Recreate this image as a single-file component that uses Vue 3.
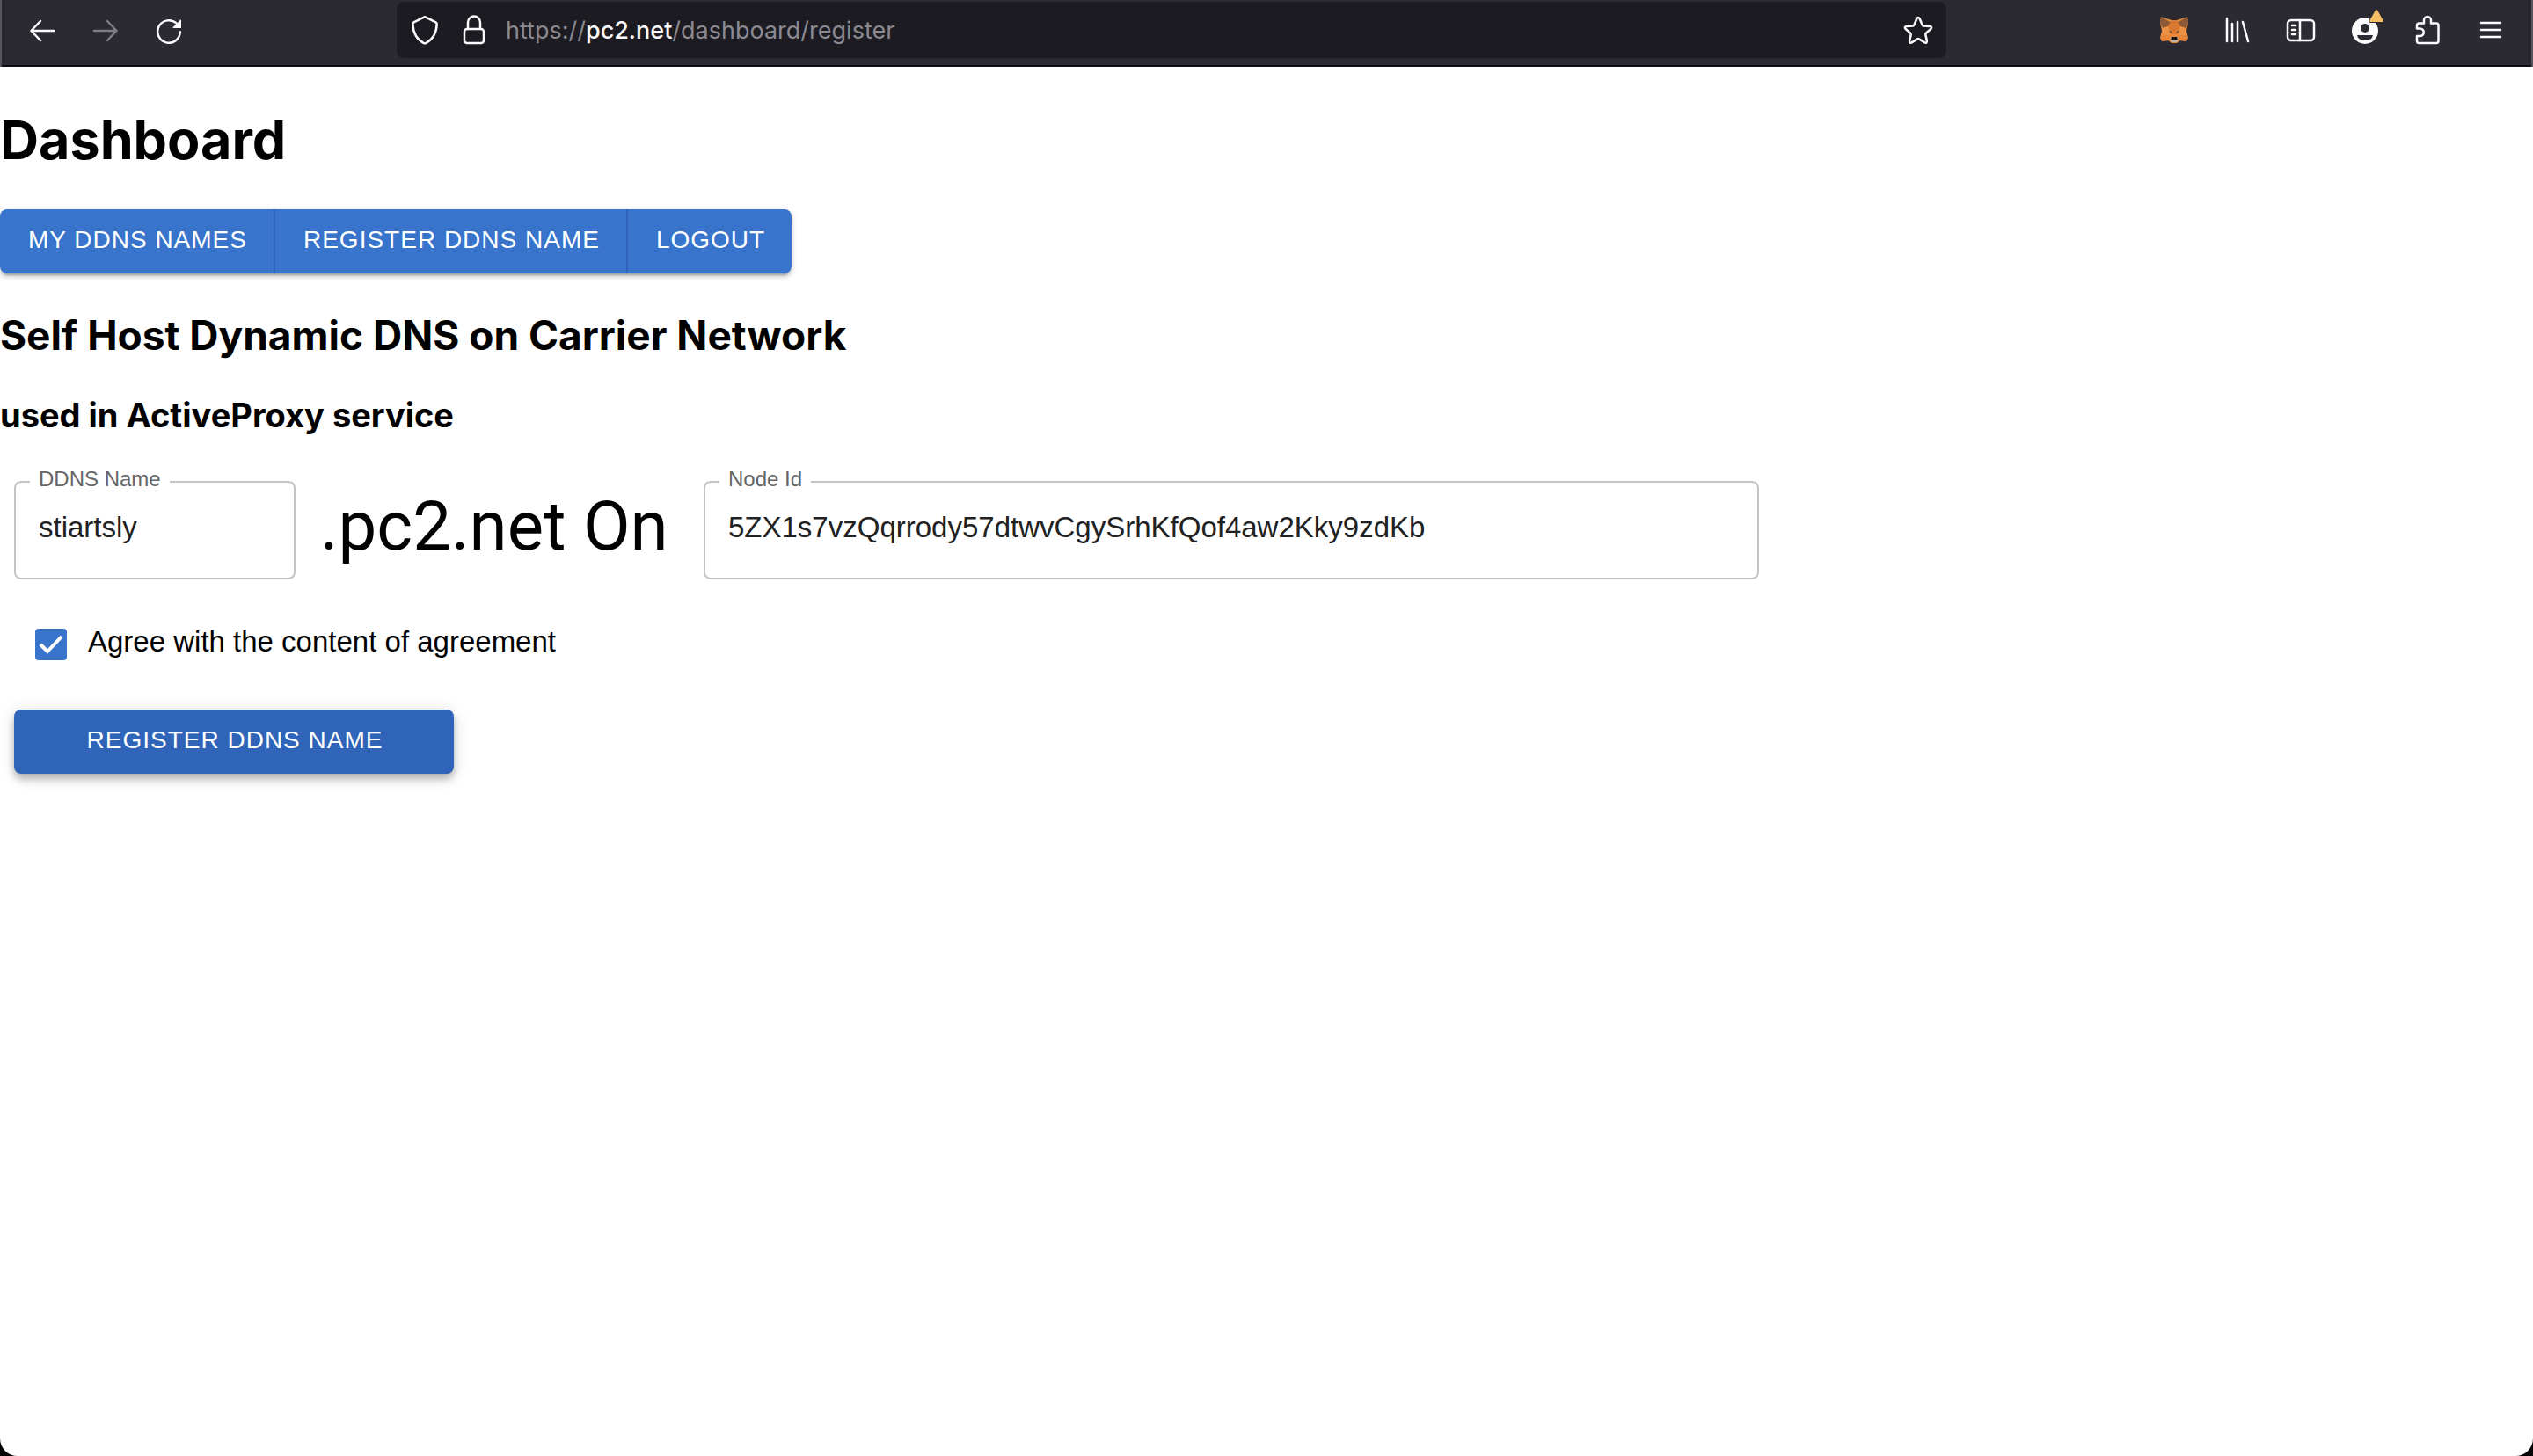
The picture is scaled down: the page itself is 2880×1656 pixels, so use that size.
<script setup>
import { ref } from 'vue'

const ddnsName = ref('stiartsly')
const nodeId = ref('5ZX1s7vzQqrrody57dtwvCgySrhKfQof4aw2Kky9zdKb')
const agreed = ref(true)
</script>

<template>
  <div class="window">
    <header class="toolbar">
      <nav class="tools" aria-label="Navigation">
        <button class="tool" type="button" aria-label="Back">
          <svg width="32" height="32" viewBox="0 0 32 32"><path d="M29 17H3.500M14 6 3.500 17 14 28" /></svg>
        </button>
        <button class="tool dim" type="button" aria-label="Forward" disabled>
          <svg width="32" height="32" viewBox="0 0 32 32"><path d="M3 17h25.500M18 6l10.500 11L18 28" /></svg>
        </button>
        <button class="tool" type="button" aria-label="Reload">
          <svg width="32" height="32" viewBox="0 0 32 32">
            <path d="M28.800 18.200A12.800 12.800 0 1 1 24.500 8.400" />
            <path class="solid" d="M30 5v8.500q0 .5-.5.5H21q-.8-.2-.3-1L29 4.800q.8-.5 1 .2z" />
          </svg>
        </button>
      </nav>
      <span class="spring"></span>
      <div class="urlbar">
        <svg class="shield" width="32" height="36" viewBox="0 0 32 36"><path d="M16 3.200 28.500 9.400q1.300.7 1.200 2.200C29.200 21 25.500 28.500 17.500 32.800q-1.500.8-3 0C6.500 28.500 2.800 21 2.300 11.600q-.1-1.500 1.200-2.200z" /></svg>
        <svg class="lock" width="28" height="36" viewBox="0 0 28 36"><rect x="3" y="17" width="22" height="16" rx="3" /><path d="M7 17V9.500a7 7 0 0 1 14 0V17" /></svg>
        <span class="url">https://<strong>pc2.net</strong>/dashboard/register</span>
        <svg class="star" width="36" height="36" viewBox="0 0 36 36"><path d="M16.300 5.400q1.700-2.800 3.400 0l3 7.100q.4.900 1.400 1l7.300.5q3 .6.9 3l-5.500 4.800q-.7.600-.5 1.600l1.600 7q.2 3-2.500 2l-6.400-4q-1-.6-2 0l-6.400 4q-2.700 1-2.500-2l1.600-7q.2-1-.5-1.600l-5.500-4.800q-2.100-2.400.9-3l7.300-.5q1-.1 1.400-1z" /></svg>
      </div>
      <span class="spring"></span>
      <nav class="tools" aria-label="Extensions and menu">
        <button class="tool" type="button" aria-label="MetaMask">
          <svg class="fox" width="32" height="32" viewBox="0 0 32 32">
            <path fill="#e58a3c" d="M1 1 13 5h6L31 1l1 7-2 9 2 8-2 4-7-1-4 3h-6l-4-3-7 1-2-4 2-8L0 8z" />
            <path fill="#8d5a38" d="M1 1 13 8 9 12 3 14 0 8zM31 1 19 8l4 4 6 2 3-6z" />
            <path fill="#d97830" d="M13 5h6l4 7-3 9h-8l-3-9z" />
            <path fill="#ed9145" d="M3 14 9 12l3 10-4 4-6-4zM29 14l-6-2-3 10 4 4 6-4z" />
            <path fill="#e98537" d="M2 22h9l2 7-4-1-7 1zM30 22h-9l-2 7 4-1 7 1z" />
            <path fill="#51443e" d="m9 17 4 1v2zM23 17l-4 1v2z" />
            <path fill="#c4b5a8" d="m11 26 3-2h4l3 2-2 4h-6z" />
            <path fill="#171416" d="M13 24h6l1 3h-8z" />
          </svg>
        </button>
        <button class="tool" type="button" aria-label="Library">
          <svg width="32" height="32" viewBox="0 0 32 32"><path d="M4 3v26M10 9v20M16 7v22M22 7l6 22" /></svg>
        </button>
        <button class="tool" type="button" aria-label="Sidebars">
          <svg width="36" height="32" viewBox="0 0 36 32"><rect x="3" y="5" width="30" height="23" rx="4" /><path d="M17 5v23M8 11h4M8 16h4M8 21h4" /></svg>
        </button>
        <button class="tool account" type="button" aria-label="Account">
          <svg width="32" height="32" viewBox="0 0 32 32">
            <circle class="solid" cx="17" cy="17" r="15" />
            <circle class="hole" cx="17" cy="14" r="5" />
            <path class="hole" d="M8 22h18q-1 6-9 6t-9-6z" />
          </svg>
          <svg class="alert" width="20" height="18" viewBox="0 0 20 18"><path d="M8.700 3q1.300-2 2.600 0l6.200 11q.8 2-1.200 2H3.700q-2 0-1.200-2z" /></svg>
        </button>
        <button class="tool" type="button" aria-label="Extensions">
          <svg width="32" height="36" viewBox="0 0 32 36"><path d="M4 16.500V13q0-2.500 2.500-2.500H12V7a4 4 0 0 1 8 0v3.500h6q2.500 0 2.500 2.500v17.500q0 2.500-2.500 2.500H6.500Q4 33 4 30.500V25h3.500a4.200 4.200 0 0 0 0-8.500z" /></svg>
        </button>
        <button class="tool" type="button" aria-label="Menu">
          <svg width="32" height="32" viewBox="0 0 32 32"><path d="M5 8h22M5 16h22M5 24h22" /></svg>
        </button>
      </nav>
    </header>

    <main>
      <h1>Dashboard</h1>
      <nav class="group" aria-label="Dashboard">
        <button class="btn" type="button">MY DDNS NAMES</button>
        <button class="btn" type="button">REGISTER DDNS NAME</button>
        <button class="btn" type="button">LOGOUT</button>
      </nav>
      <h2>Self Host Dynamic DNS on Carrier Network</h2>
      <h3>used in ActiveProxy service</h3>

      <form @submit.prevent>
        <div class="row">
          <div class="field name">
            <label for="ddns">DDNS Name</label>
            <input id="ddns" v-model="ddnsName" type="text" />
          </div>
          <span class="domain">.pc2.net On</span>
          <div class="field node">
            <label for="node">Node Id</label>
            <input id="node" v-model="nodeId" type="text" spellcheck="false" />
          </div>
        </div>
        <div class="agree">
          <input id="agree" v-model="agreed" type="checkbox" />
          <label for="agree">Agree with the content of agreement</label>
        </div>
        <button class="btn submit" type="submit">REGISTER DDNS NAME</button>
      </form>
    </main>
  </div>
</template>

<style>
body {
  background: #000;
}
</style>

<style scoped>
.window {
  box-sizing: border-box;
  min-height: 100vh;
  background: #fff;
  border-radius: 0 0 20px 20px;
  overflow: hidden;
  font-family: Inter, "Noto Sans", sans-serif;
  color: #000;
}

.toolbar {
  display: flex;
  box-sizing: border-box;
  height: 76px;
  padding: 2px 10px 10px;
  background: #2b2a33;
  border: solid #55545c;
  border-width: 0 2px;
  box-shadow: inset 0 -2px #0c0c0d;
}
.tools {
  display: flex;
}
.spring {
  flex: 13;
}
.tool {
  display: flex;
  align-items: center;
  justify-content: center;
  position: relative;
  width: 72px;
  padding: 0;
  border: 0;
  background: none;
}
.dim {
  opacity: 0.4;
}
svg {
  flex: none;
  fill: none;
  stroke: #fbfbfe;
  stroke-width: 2.5;
  stroke-linecap: round;
  stroke-linejoin: round;
}
.fox,
.solid,
.hole,
.alert {
  stroke: none;
}
.solid {
  fill: #fbfbfe;
}
.hole {
  fill: #2b2a33;
}
.alert {
  position: absolute;
  top: 7px;
  right: 12px;
  fill: #f5c065;
  stroke: #2b2a33;
  stroke-width: 2;
  paint-order: stroke;
}
.urlbar {
  display: flex;
  flex: 101;
  align-items: center;
  padding: 0 14px 0 16px;
  border-radius: 8px;
  background: #1c1b22;
}
.lock {
  margin: 0 22px 0 26px;
}
.url {
  flex: 1;
  padding-top: 2px;
  font-size: 27px;
  line-height: 36px;
  color: #8b8a90;
}
.url strong {
  font-weight: 500;
  color: #fbfbfe;
}

h1,
h2,
h3 {
  margin: 0;
  font-weight: 700;
}
h1 {
  padding: 45px 0 41px;
  font-size: 61px;
  line-height: 76px;
}
h2 {
  padding-top: 42px;
  font-size: 46px;
  line-height: 56px;
}
h3 {
  padding-top: 41px;
  font-size: 38px;
  line-height: 44px;
}

.btn {
  padding: 17px 30px 20px 32px;
  border: 0;
  background: #3874cb;
  color: #fff;
  font: 28px/36px "Liberation Sans", Arial, sans-serif;
  letter-spacing: 1px;
}
.group {
  display: flex;
  width: fit-content;
  border-radius: 8px;
  overflow: hidden;
  box-shadow: 0 6px 2px -4px rgba(0, 0, 0, 0.2), 0 4px 4px rgba(0, 0, 0, 0.14), 0 2px 10px rgba(0, 0, 0, 0.12);
}
.group .btn + .btn {
  border-left: 2px solid #3064b9;
}

form {
  display: flex;
  flex-direction: column;
  align-items: flex-start;
  gap: 56px;
  padding: 53px 16px;
  font-family: "Liberation Sans", Arial, sans-serif;
}
.row {
  display: flex;
  align-items: center;
  width: 100%;
}
.field {
  position: relative;
  box-sizing: border-box;
  height: 112px;
  border: 2px solid #c4c4c4;
  border-radius: 8px;
}
.name {
  width: 320px;
}
.node {
  flex: 1;
  max-width: 1200px;
}
.field label {
  position: absolute;
  top: -18px;
  left: 16px;
  padding: 0 10px;
  background: #fff;
  color: #666;
  font-size: 24px;
  line-height: 28px;
}
.field input {
  box-sizing: border-box;
  width: 100%;
  height: 100%;
  padding: 0 26px 6px;
  border: 0;
  outline: 0;
  background: none;
  color: #212121;
  font: 33px "Liberation Sans", Arial, sans-serif;
}
.domain {
  box-sizing: border-box;
  width: 464px;
  padding: 0 0 8px 28px;
  font-family: Roboto, sans-serif;
  font-size: 78px;
  line-height: 96px;
  white-space: nowrap;
}
.agree {
  display: flex;
  align-items: center;
  gap: 24px;
  height: 36px;
  padding-left: 24px;
}
.agree input {
  appearance: none;
  flex: none;
  width: 36px;
  height: 36px;
  margin: 0;
  border-radius: 4px;
  background: #fff;
  box-shadow: inset 0 0 0 4px #666;
}
.agree input:checked {
  box-shadow: none;
  background: #3874cb url('data:image/svg+xml,<svg xmlns="http://www.w3.org/2000/svg" viewBox="0 0 36 36"><path d="M6 18 14 26 30 9" fill="none" stroke="white" stroke-width="4"/></svg>');
}
.agree label {
  padding-bottom: 6px;
  font-size: 33px;
  line-height: 36px;
}
.submit {
  width: 500px;
  border-radius: 8px;
  background: #3064b9;
  box-shadow: 0 4px 8px -2px rgba(0, 0, 0, 0.2), 0 8px 10px rgba(0, 0, 0, 0.14), 0 2px 20px rgba(0, 0, 0, 0.12);
}
</style>
